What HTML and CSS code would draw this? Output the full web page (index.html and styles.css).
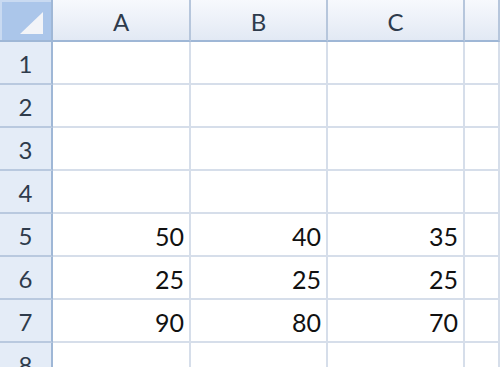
FILE: index.html
```html
<!DOCTYPE html>
<html>
<head>
<meta charset="utf-8">
<link rel="stylesheet" href="styles.css">
</head>
<body>
<div class="sheet">
  <div class="corner"><span class="tri"></span></div>
  <div class="colh">A</div>
  <div class="colh">B</div>
  <div class="colh">C</div>
  <div class="colh"></div>

  <div class="rowh">1</div><div class="cell"></div><div class="cell"></div><div class="cell"></div><div class="cell"></div>
  <div class="rowh">2</div><div class="cell"></div><div class="cell"></div><div class="cell"></div><div class="cell"></div>
  <div class="rowh">3</div><div class="cell"></div><div class="cell"></div><div class="cell"></div><div class="cell"></div>
  <div class="rowh">4</div><div class="cell"></div><div class="cell"></div><div class="cell"></div><div class="cell"></div>
  <div class="rowh">5</div><div class="cell">50</div><div class="cell">40</div><div class="cell">35</div><div class="cell"></div>
  <div class="rowh">6</div><div class="cell">25</div><div class="cell">25</div><div class="cell">25</div><div class="cell"></div>
  <div class="rowh">7</div><div class="cell">90</div><div class="cell">80</div><div class="cell">70</div><div class="cell"></div>
  <div class="rowh">8</div><div class="cell"></div><div class="cell"></div><div class="cell"></div><div class="cell"></div>
</div>
</body>
</html>
```
FILE: styles.css
```css
html, body {
  margin: 0;
  padding: 0;
  background: #ffffff;
  overflow: hidden;
}
.sheet {
  width: 500px;
  height: 367px;
  overflow: hidden;
  display: grid;
  grid-template-columns: 53px 138px 137px 137px 1fr;
  grid-template-rows: 42px repeat(8, 43px);
  font-family: Lato, "Open Sans", "Liberation Sans", sans-serif;
}
.corner {
  background: #abc6ea;
  border-right: 2px solid #9fb7d6;
  border-bottom: 2px solid #9fb7d6;
  position: relative;
  box-shadow: inset 2px 2px 0 #c9daf1;
}
.tri {
  position: absolute;
  right: 8px;
  bottom: 6px;
  width: 0;
  height: 0;
  border-left: 23px solid transparent;
  border-bottom: 22px solid #f2f4f8;
}
.colh {
  background: linear-gradient(#f7f9fd, #e2e9f4);
  border-right: 2px solid #b6c6dc;
  border-bottom: 2px solid #9fb7d6;
  display: flex;
  align-items: center;
  justify-content: center;
  font-size: 24px;
  color: #2e3b4c;
  padding-top: 2px;
}
.rowh {
  background: #e4ecf7;
  border-right: 2px solid #9fb7d6;
  border-bottom: 2px solid #b9c9df;
  display: flex;
  align-items: center;
  justify-content: center;
  font-size: 24px;
  color: #2e3b4c;
  padding-top: 2px;
}
.cell {
  border-right: 2px solid #d6deea;
  border-bottom: 2px solid #d6deea;
  display: flex;
  align-items: center;
  justify-content: flex-end;
  padding-right: 5px;
  padding-top: 2px;
  font-size: 25px;
  color: #111111;
}
```
